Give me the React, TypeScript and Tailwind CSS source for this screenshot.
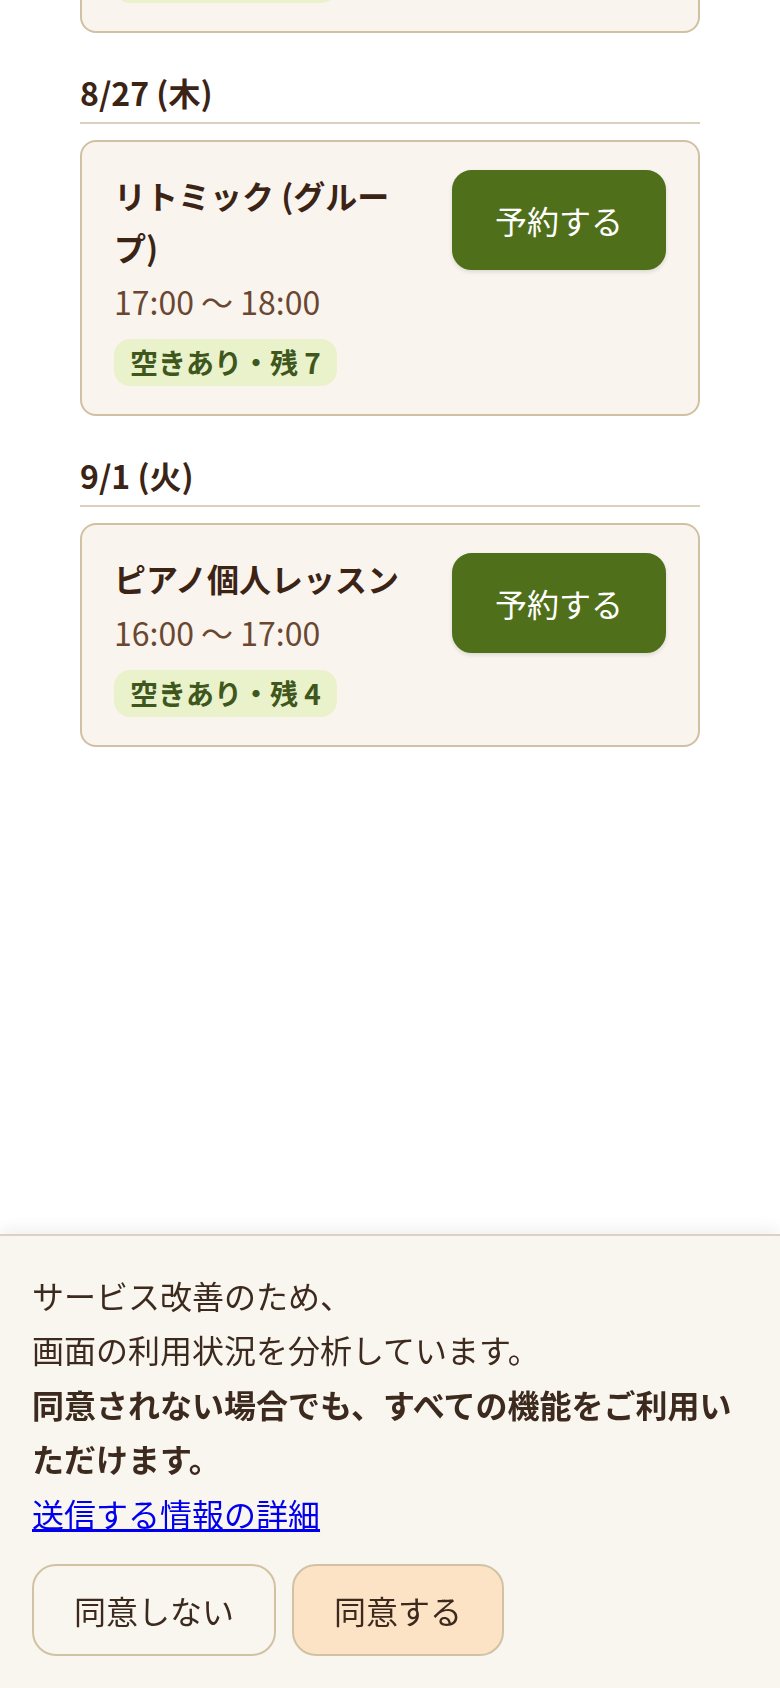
import React from 'react';

interface Lesson {
  id: string;
  title: string;
  time: string;
  remaining: number;
}

interface DaySection {
  date: string;
  lessons: Lesson[];
}

const font = { fontFamily: '"Noto Sans CJK JP", "Noto Sans", sans-serif' };

// 直前の枠（スクロールで上に隠れている）
const previous: Lesson = { id: 'prev', title: 'ピアノ個人レッスン', time: '15:00 〜 16:00', remaining: 3 };

const days: DaySection[] = [
  {
    date: '8/27 (木)',
    lessons: [{ id: 'l1', title: 'リトミック (グループ)', time: '17:00 〜 18:00', remaining: 7 }],
  },
  {
    date: '9/1 (火)',
    lessons: [{ id: 'l2', title: 'ピアノ個人レッスン', time: '16:00 〜 17:00', remaining: 4 }],
  },
];

function LessonCard({ lesson }: { lesson: Lesson }) {
  return (
    <div className="flex gap-[32px] rounded-[16px] border-2 border-[#cfc1a2] bg-[#f9f5ee] px-[32px] py-[28px]">
      <div className="min-w-0 flex-1">
        <h3 className="text-[32px] font-bold leading-[1.6] text-[#3b2416]">{lesson.title}</h3>
        <p className="mt-[4px] text-[32px] leading-[1.5] text-[#6b4731]">{lesson.time}</p>
        <span className="mt-[14px] inline-block rounded-[16px] bg-[#e9f2cb] px-[16px] py-[4px] text-[28px] font-bold leading-[1.4] text-[#3f571c]">
          空きあり・残 {lesson.remaining}
        </span>
      </div>
      <button className="shrink-0 self-start rounded-[20px] border-2 border-[#506f1a] bg-[#506f1a] px-[41px] py-[24px] text-[32px] leading-[1.5] text-white shadow-[0_2px_4px_rgba(0,0,0,0.12)]">
        予約する
      </button>
    </div>
  );
}

export default function App() {
  return (
    <div className="h-[1688px] overflow-hidden bg-white" style={font}>
      {/* Schedule list (scrolled) */}
      <div className="-mt-[191px] px-[80px]">
        <LessonCard lesson={previous} />

        {days.map((day) => (
          <section key={day.date} className="mt-[35px]">
            <h2 className="border-b-2 border-[#dbd0be] pb-[6px] text-[32px] font-bold leading-[1.5] text-[#3b2416]">
              {day.date}
            </h2>
            <div className="mt-[16px] space-y-[16px]">
              {day.lessons.map((lesson) => (
                <LessonCard key={lesson.id} lesson={lesson} />
              ))}
            </div>
          </section>
        ))}
      </div>

      {/* Consent banner */}
      <div className="fixed bottom-0 left-0 right-0 border-t-2 border-[#ddd2bf] bg-[#f9f5ef] p-[32px] text-[32px] leading-[1.7] text-[#3d2a1e] shadow-[0_-6px_14px_rgba(0,0,0,0.06)]">
        <p>
          サービス改善のため、
          <br />
          画面の利用状況を分析しています。
        </p>
        <p className="font-bold">同意されない場合でも、すべての機能をご利用いただけます。</p>
        <a href="#" className="text-[#0000ee] underline">
          送信する情報の詳細
        </a>
        <div className="mt-[24px] flex gap-[16px]">
          <button className="rounded-[24px] border-2 border-[#d1c2a4] bg-[#f9f5ef] px-[40px] py-[20px] leading-[1.5]">
            同意しない
          </button>
          <button className="rounded-[24px] border-2 border-[#d1c2a4] bg-[#fce3c6] px-[40px] py-[20px] leading-[1.5]">
            同意する
          </button>
        </div>
      </div>
    </div>
  );
}
